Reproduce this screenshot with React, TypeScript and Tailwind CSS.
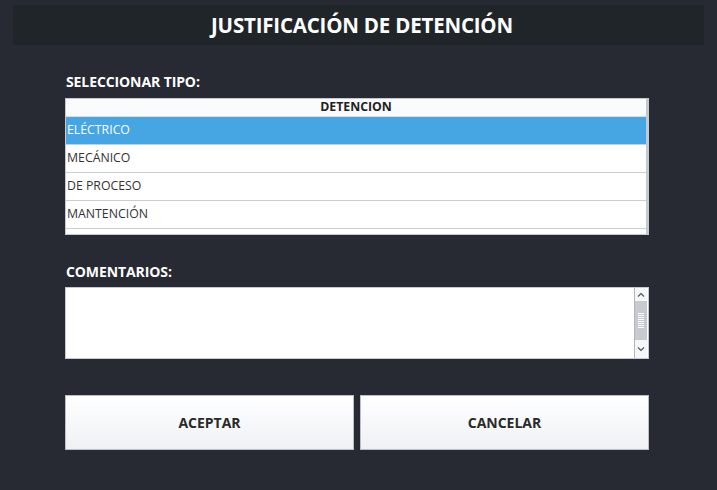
import React from "react";

const tipos = ["ELÉCTRICO", "MECÁNICO", "DE PROCESO", "MANTENCIÓN"];

export default function App() {
  const selected = 0;

  return (
    <div
      className="w-[717px] h-[490px] bg-[#282a33] overflow-hidden pt-[5px]"
      style={{ fontFamily: '"Open Sans", "Liberation Sans", sans-serif' }}
    >
      {/* header */}
      <div className="mx-[13px] h-[40px] bg-[#1f2529] flex items-center justify-center pl-[7px]">
        <h1 className="text-white font-bold text-[20.5px] tracking-[-0.2px]">
          JUSTIFICACIÓN DE DETENCIÓN
        </h1>
      </div>

      <div className="ml-[65px] w-[584px] flex flex-col">
        <div className="mt-[27px] pl-[1px] text-white font-bold text-[14px] leading-[20px] tracking-[-0.1px]">
          SELECCIONAR TIPO:
        </div>

        {/* tipo table */}
        <div className="mt-[6px] h-[137px] bg-white border border-[#c3c9d0] border-r-[3px] overflow-hidden">
          <div className="h-[18px] flex items-center justify-center bg-[#fafbfc] border-b border-[#d7dde3] text-[12.3px] font-bold text-[#222] leading-none">
            DETENCION
          </div>
          {tipos.map((t, i) => (
            <div
              key={t}
              className={`h-[28px] flex items-center pl-[1px] text-[12.3px] border-b border-[#c9ced4] ${
                i === selected
                  ? "bg-[#45a6e3] text-white border-[#7fb6d8]"
                  : "bg-white text-[#333]"
              }`}
            >
              {t}
            </div>
          ))}
        </div>

        <div className="mt-[27px] pl-[1px] text-white font-bold text-[14px] leading-[20px] tracking-[-0.1px]">
          COMENTARIOS:
        </div>

        {/* comments */}
        <div className="mt-[5px] h-[72px] bg-white border border-[#c3c9d0] flex">
          <textarea className="flex-1 resize-none outline-none bg-transparent text-[12px] p-1" />
          <div className="w-[13px] mr-[1px] bg-[#c6cbd0] border-l border-[#b0b6bc] flex flex-col justify-between">
            <div className="h-[13px] bg-[#f4f7fa] flex items-center justify-center">
              <svg width="8" height="5" viewBox="0 0 8 5">
                <path d="M1 4.5 L4 1.5 L7 4.5" fill="none" stroke="#555" strokeWidth="1.2" />
              </svg>
            </div>
            <div className="flex flex-col items-center gap-[1px]">
              {Array.from({ length: 8 }).map((_, i) => (
                <div key={i} className="w-[6px] h-[1px] bg-white" />
              ))}
            </div>
            <div className="h-[18px] bg-[#f4f7fa] flex items-center justify-center">
              <svg width="8" height="5" viewBox="0 0 8 5">
                <path d="M1 0.5 L4 3.5 L7 0.5" fill="none" stroke="#555" strokeWidth="1.2" />
              </svg>
            </div>
          </div>
        </div>

        {/* buttons */}
        <div className="mt-[36px] flex gap-[6px]">
          <button className="w-[290px] h-[55px] border border-[#b9c0c8] bg-gradient-to-b from-white via-[#f7f8fa] to-[#eef1f3] text-[#2a2a2a] font-bold text-[14px]">
            ACEPTAR
          </button>
          <button className="w-[290px] h-[55px] border border-[#b9c0c8] bg-gradient-to-b from-white via-[#f7f8fa] to-[#eef1f3] text-[#2a2a2a] font-bold text-[14px]">
            CANCELAR
          </button>
        </div>
      </div>
    </div>
  );
}
